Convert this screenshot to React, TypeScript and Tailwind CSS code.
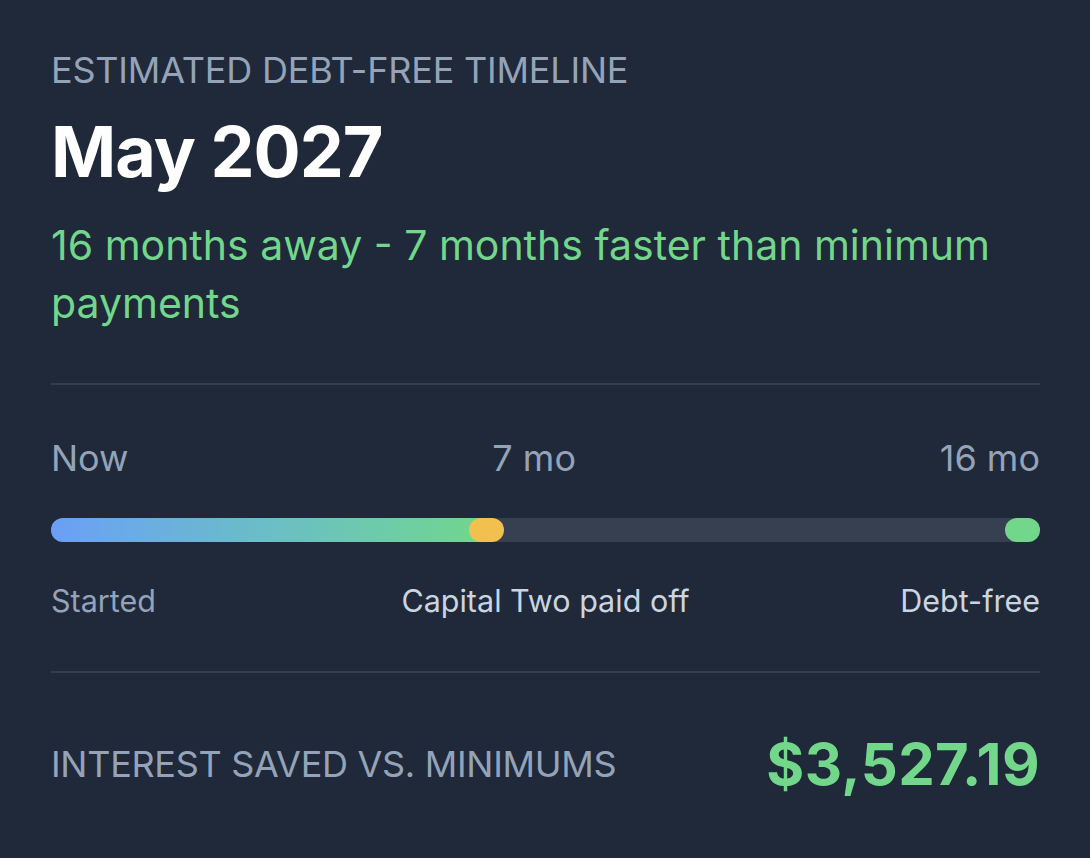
import React from "react";

export default function App() {
  const pct = (7 / 16) * 100;
  return (
    <div
      className="w-[1090px] h-[858px] bg-[#1f2939] pl-[51px] pr-[50px] pt-[48px] overflow-hidden"
      style={{ fontFamily: "Inter, 'Noto Sans', sans-serif" }}
    >
      <div className="text-[36px] leading-[44px] text-[#94a3b8] tracking-[-0.2px]">
        ESTIMATED DEBT-FREE TIMELINE
      </div>
      <div className="mt-[18px] text-[70px] leading-[84px] font-bold text-white tracking-[-1px]">
        May 2027
      </div>
      <div className="mt-[22px] text-[41px] leading-[58px] text-[#72d68b]">
        16 months away - 7 months faster than minimum payments
      </div>

      <div className="mt-[51px] h-[2px] bg-[#343d4e]" />

      <div className="mt-[51px] flex justify-between text-[36px] leading-[44px] text-[#94a3b8]">
        <span>Now</span>
        <span>7 mo</span>
        <span>16 mo</span>
      </div>

      <div className="mt-[38px] relative h-[24px] rounded-full bg-[#364051]">
        <div
          className="h-full rounded-l-full bg-gradient-to-r from-[#6b9ff6] to-[#72d68b]"
          style={{ width: `${pct}%` }}
        />
        <div
          className="absolute top-0 h-[24px] w-[35px] -ml-[15px] rounded-full bg-[#f2c04e]"
          style={{ left: `${pct}%` }}
        />
        <div className="absolute top-0 right-0 h-[24px] w-[35px] rounded-full bg-[#72d68b]" />
      </div>

      <div className="mt-[40px] grid grid-cols-3 text-[30.5px] leading-[38px]">
        <span className="text-[#94a3b8]">Started</span>
        <span className="text-center text-[#cbd5e1]">Capital Two paid off</span>
        <span className="text-right text-[#cbd5e1]">Debt-free</span>
      </div>

      <div className="mt-[51px] h-[2px] bg-[#343d4e]" />

      <div className="mt-[56px] flex items-center justify-between">
        <span className="text-[36px] leading-[44px] text-[#94a3b8] tracking-[-0.3px]">
          INTEREST SAVED VS. MINIMUMS
        </span>
        <span className="text-[58px] leading-[70px] font-bold text-[#72d68b] tracking-[0.4px]">
          $3,527.19
        </span>
      </div>
    </div>
  );
}
